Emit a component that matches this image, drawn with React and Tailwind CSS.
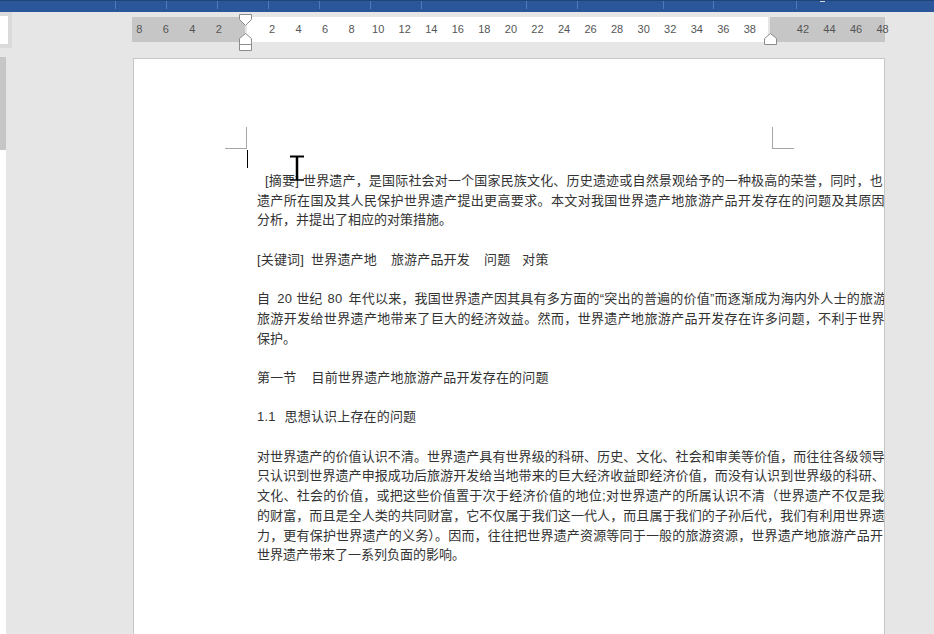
const Line = ({ className = '', children }) => <div className={className}>{children}</div>;

export default function App() {
  const nums = ['8','6','4','2','','2','4','6','8','10','12','14','16','18','20','22','24','26','28','30','32','34','36','38','','42','44','46','48'];
  return (
    <div className="relative h-screen w-full overflow-hidden bg-[#e6e6e6] flex flex-col">
      {/* title bar */}
      <div className="h-3 shrink-0 bg-[#2b579a] border-t border-[#1f4478] flex items-start">
        <div className="h-2 w-[116px] border-r border-[#4f7cba]" />
        <div className="h-2 w-[51px] border-r border-[#4f7cba]" />
        <div className="h-2 w-[51px] border-r border-[#4f7cba]" />
        <div className="h-2 w-[51px] border-r border-[#4f7cba]" />
        <div className="h-2 w-[51px] border-r border-[#4f7cba]" />
        <div className="h-2 w-[51px] border-r border-[#4f7cba]" />
        <div className="h-2 w-[51px] border-r border-[#4f7cba]" />
        <div className="h-2 w-[105px] border-r border-[#4f7cba]" />
        <div className="h-2 w-[51px] border-r border-[#4f7cba]" />
        <div className="h-2 w-[86px] border-r border-[#4f7cba]" />
        <div className="h-2 w-[50px] border-r border-[#4f7cba]" />
        <div className="h-2 w-[83px] border-r border-[#4f7cba]" />
        <div className="h-[1px] w-[5px] ml-[23px] bg-[#d9d9d9]" />
      </div>

      <div className="flex flex-1 min-h-0">
        {/* left pane */}
        <div className="w-[132px] shrink-0 flex flex-col items-start">
          <div className="w-3 h-9 bg-[#dadada] pt-1 pr-1 pb-1">
            <div className="h-full bg-white" />
          </div>
          <div className="mt-[9px] w-[6px] flex-1 flex flex-col bg-white">
            <div className="h-[93px] bg-[#c6c6c6]" />
          </div>
        </div>

        {/* document column */}
        <div className="w-[753px] shrink-0 flex flex-col">
          <div className="relative mt-[5px] h-[25px] shrink-0 flex">
            <div className="w-[113px] bg-[#c6c6c6]" />
            <div className="w-[2px] bg-[#e6e6e6]" />
            <div className="w-[521px] bg-white" />
            <div className="w-[2px] bg-[#e6e6e6]" />
            <div className="flex-1 bg-[#c6c6c6]" />
            <div className="absolute left-[-6px] top-0 h-full flex items-center font-['Liberation_Sans',sans-serif] text-[11px] text-[#555555]">
              {nums.map((n, i) => (
                <span key={i} className="w-[26.55px] shrink-0 text-center">{n}</span>
              ))}
            </div>
          </div>
          <div className="mt-4 ml-[1px] flex-1 min-h-0 overflow-hidden bg-white border-t border-l border-r border-[#c6c6c6] pt-[112px] pl-[123px] text-[13px] leading-[19.7px] text-[#333333] font-['Liberation_Sans','Noto_Sans_CJK_SC',sans-serif] whitespace-pre">
            <div className="mb-[19.7px]">
              <Line className="tracking-[0.18px] pl-2">[摘要]<span className="ml-[4px]">世界遗产，是国际社会对一个国家民族文化、历史遗迹或自然景观给予的一种极高的荣誉，同时，也</span></Line>
              <Line className="tracking-[0.36px]">遗产所在国及其人民保护世界遗产提出更高要求。本文对我国世界遗产地旅游产品开发存在的问题及其原因</Line>
              <Line>分析，并提出了相应的对策措施。</Line>
            </div>
            <div className="mb-[19.7px]">
              <Line className="tracking-[0.17px]">[关键词]<span className="ml-[7px]">世界遗产地</span><span className="ml-[14px]">旅游产品开发</span><span className="ml-[14px]">问题</span><span className="ml-[12px]">对策</span></Line>
            </div>
            <div className="mb-[19.7px]">
              <Line className="tracking-[0.22px]">自<span className="ml-[7px]">20</span><span className="ml-[4px]">世纪</span><span className="ml-[5px]">80</span><span className="ml-[6px]">年代以来，我国世界遗产因其具有多方面的“突出的普遍的价值”而逐渐成为海内外人士的旅游</span></Line>
              <Line className="tracking-[0.36px]">旅游开发给世界遗产地带来了巨大的经济效益。然而，世界遗产地旅游产品开发存在许多问题，不利于世界</Line>
              <Line>保护。</Line>
            </div>
            <div className="mb-[19.7px]">
              <Line className="tracking-[0.17px]">第一节<span className="ml-[15px]">目前世界遗产地旅游产品开发存在的问题</span></Line>
            </div>
            <div className="mb-[19.7px]">
              <Line className="tracking-[0.17px]">1.1<span className="ml-[9px]">思想认识上存在的问题</span></Line>
            </div>
            <div className="mb-[19.7px]">
              <Line className="tracking-[0.08px]">对世界遗产的价值认识不清。世界遗产具有世界级的科研、历史、文化、社会和审美等价值，而往往各级领导</Line>
              <Line className="tracking-[0.08px]">只认识到世界遗产申报成功后旅游开发给当地带来的巨大经济收益即经济价值，而没有认识到世界级的科研、</Line>
              <Line className="tracking-[0.27px]">文化、社会的价值，或把这些价值置于次于经济价值的地位;对世界遗产的所属认识不清（世界遗产不仅是我</Line>
              <Line className="tracking-[0.08px]">的财富，而且是全人类的共同财富，它不仅属于我们这一代人，而且属于我们的子孙后代，我们有利用世界遗</Line>
              <Line className="tracking-[0.18px]">力，更有保护世界遗产的义务）。因而，往往把世界遗产资源等同于一般的旅游资源，世界遗产地旅游产品开</Line>
              <Line>世界遗产带来了一系列负面的影响。</Line>
            </div>
          </div>
        </div>
      </div>

      {/* ruler indent markers */}
      <svg className="absolute left-[236px] top-[12px]" width="20" height="40" viewBox="0 0 20 40" fill="#fff" stroke="#8c8c8c">
        <path d="M3.5 2.5H15.5V7.5L9.5 13.5L3.5 7.5Z" />
        <path d="M9.5 21.5L15.5 26.5V38.5H3.5V26.5Z" />
        <path d="M3.5 32.5H15.5" />
      </svg>
      <svg className="absolute left-[761px] top-[30px]" width="20" height="16" viewBox="0 0 20 16" fill="#fff" stroke="#8c8c8c">
        <path d="M9.5 3.5L15.5 8.5V14.5H3.5V8.5Z" />
      </svg>

      {/* crop marks */}
      <div className="absolute left-[225px] top-[127px] w-[22px] h-[22px] border-r border-b border-[#a6a6a6]" />
      <div className="absolute left-[772px] top-[127px] w-[22px] h-[22px] border-l border-b border-[#a6a6a6]" />

      {/* text caret */}
      <div className="absolute left-[247px] top-[150px] w-[1px] h-[18px] bg-black" />

      {/* mouse I-beam */}
      <svg className="absolute left-[289px] top-[155px]" width="16" height="27" viewBox="0 0 16 27" fill="none" stroke="#000">
        <path d="M1 1.5H15" strokeWidth="2" />
        <path d="M8 2V25" strokeWidth="2.5" />
        <path d="M1 25H15" strokeWidth="1.5" />
      </svg>
    </div>
  );
}
